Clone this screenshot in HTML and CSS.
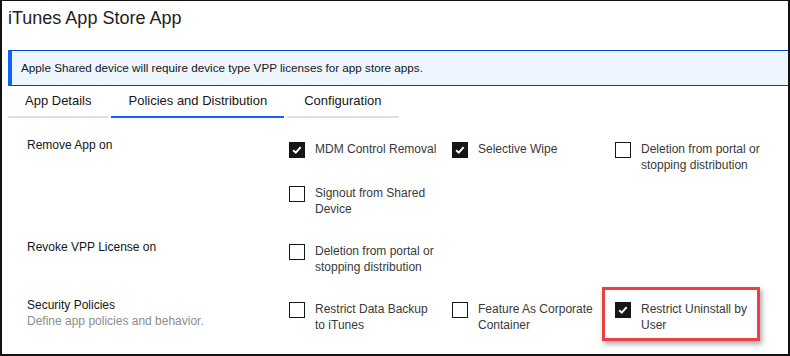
FILE: index.html
```html
<!DOCTYPE html>
<html lang="en">
<head>
    <meta charset="UTF-8">
    <meta name="viewport" content="width=device-width, initial-scale=1.0">
    <title>iTunes App Store App</title>
    <link rel="stylesheet" href="styles.css">
</head>
<body>
    <div class="frame">
        <h1 class="title">iTunes App Store App</h1>

        <div class="notice">Apple Shared device will require device type VPP licenses for app store apps.</div>

        <div class="tabs">
            <div class="tab">App Details</div>
            <div class="tab active">Policies and Distribution</div>
            <div class="tab">Configuration</div>
        </div>

        <div class="content">
            <div class="section">
                <div class="section-label">Remove App on</div>
                <div class="options">
                    <div class="option">
                        <span class="box checked"><svg viewBox="0 0 16 16"><path d="M3.6 8.2 L6.6 11 L12.2 4.6"/></svg></span>
                        <span class="option-text">MDM Control Removal</span>
                    </div>
                    <div class="option">
                        <span class="box checked"><svg viewBox="0 0 16 16"><path d="M3.6 8.2 L6.6 11 L12.2 4.6"/></svg></span>
                        <span class="option-text">Selective Wipe</span>
                    </div>
                    <div class="option">
                        <span class="box"></span>
                        <span class="option-text">Deletion from portal or stopping distribution</span>
                    </div>
                    <div class="option">
                        <span class="box"></span>
                        <span class="option-text">Signout from Shared Device</span>
                    </div>
                </div>
            </div>

            <div class="section">
                <div class="section-label">Revoke VPP License on</div>
                <div class="options">
                    <div class="option">
                        <span class="box"></span>
                        <span class="option-text">Deletion from portal or stopping distribution</span>
                    </div>
                </div>
            </div>

            <div class="section">
                <div class="section-label">
                    Security Policies
                    <div class="section-desc">Define app policies and behavior.</div>
                </div>
                <div class="options">
                    <div class="option">
                        <span class="box"></span>
                        <span class="option-text">Restrict Data Backup to iTunes</span>
                    </div>
                    <div class="option">
                        <span class="box"></span>
                        <span class="option-text">Feature As Corporate Container</span>
                    </div>
                    <div class="option highlight">
                        <span class="box checked"><svg viewBox="0 0 16 16"><path d="M3.6 8.2 L6.6 11 L12.2 4.6"/></svg></span>
                        <span class="option-text">Restrict Uninstall by User</span>
                    </div>
                </div>
            </div>
        </div>
    </div>
</body>
</html>
```

FILE: styles.css
```css
body {
    margin: 0;
    font-family: 'Liberation Sans', Arial, sans-serif;
    background-color: #fff;
    color: #161616;
}

.frame {
    box-sizing: border-box;
    width: 790px;
    height: 356px;
    border: 2px solid #111;
    border-top-width: 1px;
    overflow: hidden;
}

.title {
    margin: 0;
    padding: 5px 0 0 6px;
    font-size: 18px;
    font-weight: normal;
    line-height: 24px;
    color: #222;
}

.notice {
    margin: 20px 0 0 6px;
    height: 34px;
    line-height: 34px;
    padding-left: 9px;
    border-left: 4px solid #0f62fe;
    border-top: 1px solid #0043ce;
    border-bottom: 1px solid #0043ce;
    background-color: #edf5ff;
    font-size: 11.7px;
    color: #161616;
}

.tabs {
    display: flex;
    gap: 3px;
    margin-left: 6px;
}

.tab {
    padding: 0 17px;
    line-height: 30px;
    font-size: 13px;
    border-bottom: 2px solid #e0e0e0;
    text-align: center;
}

.tab.active {
    border-bottom-color: #0f62fe;
}

.content {
    padding: 23px 0 0 25px;
}

.section {
    display: flex;
    margin-bottom: 26px;
}

.section-label {
    width: 262px;
    flex-shrink: 0;
    margin-top: -4px;
    font-size: 12px;
    line-height: 16px;
}

.section-desc {
    color: #8d8d8d;
    font-size: 12px;
}

.options {
    display: grid;
    grid-template-columns: repeat(3, 163px);
    row-gap: 12px;
}

.option {
    display: flex;
    gap: 10px;
    position: relative;
}

.box {
    box-sizing: border-box;
    width: 16px;
    height: 16px;
    margin-top: 1px;
    flex-shrink: 0;
    border: 1px solid #161616;
    background-color: #fff;
}

.box.checked {
    background-color: #161616;
}

.box svg {
    display: block;
    width: 14px;
    height: 14px;
}

.box svg path {
    fill: none;
    stroke: #fff;
    stroke-width: 2.2;
}

.option-text {
    width: 124px;
    font-size: 12px;
    line-height: 16px;
    color: #393939;
}

/* red annotation box */
.highlight::after {
    content: '';
    position: absolute;
    left: -13px;
    top: -14px;
    right: 18px;
    bottom: -8px;
    border: 3px solid #ee3e45;
    box-shadow: 2px 3px 5px rgba(0, 0, 0, 0.35);
}
```
